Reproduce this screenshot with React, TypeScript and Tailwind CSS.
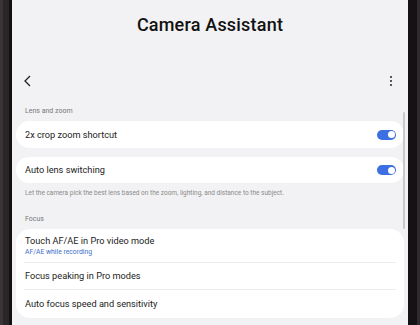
import React from "react";

function Toggle() {
  return (
    <div className="flex h-[10px] w-[19px] items-center justify-end rounded-full bg-[#3b6fe2] pr-[1.5px]">
      <div className="h-[7px] w-[7px] rounded-full bg-white" />
    </div>
  );
}

export default function App() {
  const font = { fontFamily: "Roboto, 'Noto Sans', sans-serif" };
  return (
    <div className="flex h-[325px] w-[420px] overflow-hidden bg-[#1a1719]" style={font}>
      <div className="flex h-full w-[12px]">
        <div className="h-full w-[3px] bg-[#3a3437]" />
        <div className="h-full w-[6px] bg-[#2a2628]" />
        <div className="h-full w-[3px] bg-[#121012]" />
      </div>
      <div className="relative flex h-full w-[396px] flex-col bg-[#f2f2f4]">
        <div className="flex h-[48px] items-center justify-center pt-[1px]">
          <span className="text-[18px] font-medium tracking-[0.2px] text-[#111]">Camera Assistant</span>
        </div>
        <div className="mt-[21px] flex h-[24px] items-center justify-between px-[12px]">
          <svg width="10" height="12" viewBox="0 0 10 12" className="-ml-[1px]">
            <path d="M7 1 L2 6 L7 11" fill="none" stroke="#222" strokeWidth="1.3" />
          </svg>
          <svg width="4" height="12" viewBox="0 0 4 12" className="mr-[3px]">
            <circle cx="2" cy="2" r="1.1" fill="#333" />
            <circle cx="2" cy="6" r="1.1" fill="#333" />
            <circle cx="2" cy="10" r="1.1" fill="#333" />
          </svg>
        </div>
        <div className="mt-[13px] px-[13px] text-[7px] leading-[10px] text-[#777]">Lens and zoom</div>
        <div className="mx-[4px] mt-[5px] flex h-[27px] items-center justify-between rounded-[14px] bg-white pl-[9px] pr-[8px]">
          <span className="text-[9.2px] text-[#1c1c1c]">2x crop zoom shortcut</span>
          <Toggle />
        </div>
        <div className="mx-[4px] mt-[9px] flex h-[26px] items-center justify-between rounded-[14px] bg-white pl-[9px] pr-[8px]">
          <span className="text-[9.2px] text-[#1c1c1c]">Auto lens switching</span>
          <Toggle />
        </div>
        <div className="mt-[5px] px-[13px] text-[6.5px] leading-[10px] text-[#8a8a8a]">
          Let the camera pick the best lens based on the zoom, lighting, and distance to the subject.
        </div>
        <div className="mt-[16px] px-[13px] text-[7px] leading-[10px] text-[#777]">Focus</div>
        <div className="mx-[4px] mt-[5px] flex h-[89px] flex-col rounded-[14px] bg-white px-[8px]">
          <div className="flex h-[34px] flex-col justify-center border-b border-[#ececee] pl-[1px] pt-[1px]">
            <span className="text-[9.2px] leading-[12px] text-[#1c1c1c]">Touch AF/AE in Pro video mode</span>
            <span className="text-[6.8px] leading-[10px] text-[#3d6fc8]">AF/AE while recording</span>
          </div>
          <div className="flex h-[27px] items-center border-b border-[#ececee] pl-[1px]">
            <span className="text-[9.2px] text-[#1c1c1c]">Focus peaking in Pro modes</span>
          </div>
          <div className="flex h-[28px] items-center pl-[1px]">
            <span className="text-[9.2px] text-[#1c1c1c]">Auto focus speed and sensitivity</span>
          </div>
        </div>
        <div className="absolute left-[391px] top-[112px] h-[117px] w-[1.5px] rounded-full bg-[#c9c9cc]" />
      </div>
      <div className="flex h-full w-[12px]">
        <div className="h-full w-[9px] bg-[#141214]" />
        <div className="h-full w-[3px] bg-[#2e2a2e]" />
      </div>
    </div>
  );
}
